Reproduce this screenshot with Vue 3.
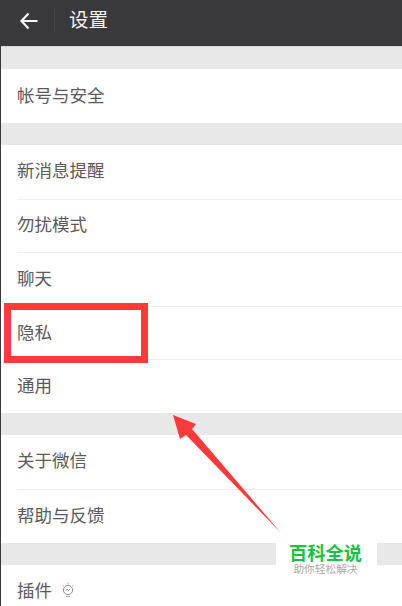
<template>
  <div class="page">
    <header class="topbar">
      <svg class="back" width="20" height="18" viewBox="0 0 20 18">
        <path d="M18.5 9H3M9.5 1.5 2.5 9l7 7.5" fill="none" stroke="#f4f4f4" stroke-width="2.2" />
      </svg>
      <span class="divider"></span>
      <h1>设置</h1>
    </header>

    <section v-for="(group, i) in groups" :key="i" :class="['group', { dense: i === 1 }]">
      <div v-for="item in group" :key="item" class="row">
        <span>{{ item }}</span>
        <svg v-if="item === '插件'" class="bulb" width="14" height="16" viewBox="0 0 14 16">
          <circle cx="7" cy="8" r="4.6" fill="none" stroke="#8c8c8c" stroke-width="1" />
          <path d="M4.8 8.6 6.2 7.2 7.4 8.6 9 7.2" fill="none" stroke="#8c8c8c" stroke-width="1" />
          <path d="M5 14.5h4M7 .5v1.8M1.6 3l1.2 1.2M12.4 3l-1.2 1.2" fill="none" stroke="#a8a8a8" stroke-width="1" />
        </svg>
      </div>
    </section>

    <div class="highlight"></div>

    <svg class="arrow" width="402" height="606" viewBox="0 0 402 606">
      <polygon points="173,415 196,424 192,429 281,533 186,435 180,439" fill="#fd3a3a" />
    </svg>

    <div class="stamp">
      <strong>百科全说</strong>
      <small>助你轻松解决</small>
    </div>
  </div>
</template>

<script setup>
const groups = [
  ['帐号与安全'],
  ['新消息提醒', '勿扰模式', '聊天', '隐私', '通用'],
  ['关于微信', '帮助与反馈'],
  ['插件'],
]
</script>

<style scoped>
.page {
  position: relative;
  width: 402px;
  height: 606px;
  box-sizing: border-box;
  overflow: hidden;
  background: #e8e8e8;
  border-left: 1px solid #3a3a3c;
  font-family: "Noto Sans CJK SC", "Liberation Sans", sans-serif;
}

.topbar {
  display: flex;
  align-items: center;
  height: 47px;
  box-sizing: border-box;
  padding: 0 0 8px 18px;
  background: #3a3a3c;
  border-bottom: 1px solid #d8d8d8;
}

.back {
  flex: none;
  margin-top: 3px;
}

.divider {
  width: 1px;
  height: 26px;
  margin: 2px 0 0 15px;
  background: #444446;
}

h1 {
  margin: 0 0 0 14px;
  color: #f2f2f2;
  font-size: 19.5px;
  font-weight: 400;
  line-height: 1;
}

.group {
  margin-top: 22px;
  padding-left: 16px;
  background: #fff;
}

.row {
  display: flex;
  align-items: center;
  gap: 9px;
  height: 54px;
  box-sizing: border-box;
  padding-bottom: 4px;
  color: #5a5a5a;
  font-size: 17.5px;
  border-top: 1px solid #eee;
}

.dense .row {
  height: 53.6px;
}

.row:first-child {
  border-top: 0;
}

.bulb {
  margin-top: 1px;
}

.highlight {
  position: absolute;
  left: 3px;
  top: 303px;
  width: 144px;
  height: 60px;
  box-sizing: border-box;
  border: 7px solid #fd3a3a;
}

.arrow {
  position: absolute;
  left: -1px;
  top: 0;
}

.stamp {
  position: absolute;
  left: 275px;
  top: 543px;
  display: flex;
  flex-direction: column;
  align-items: center;
  width: 101px;
  height: 40px;
  padding-right: 2px;
  box-sizing: border-box;
  background: #fff;
}

.stamp strong {
  color: #17c43f;
  font-size: 18.25px;
  font-weight: 700;
  line-height: 18px;
}

.stamp small {
  margin-top: 1px;
  color: #a8a8a8;
  font-size: 10.7px;
  line-height: 14px;
}
</style>

<style>
body {
  margin: 0;
  background: #fff;
}
</style>
